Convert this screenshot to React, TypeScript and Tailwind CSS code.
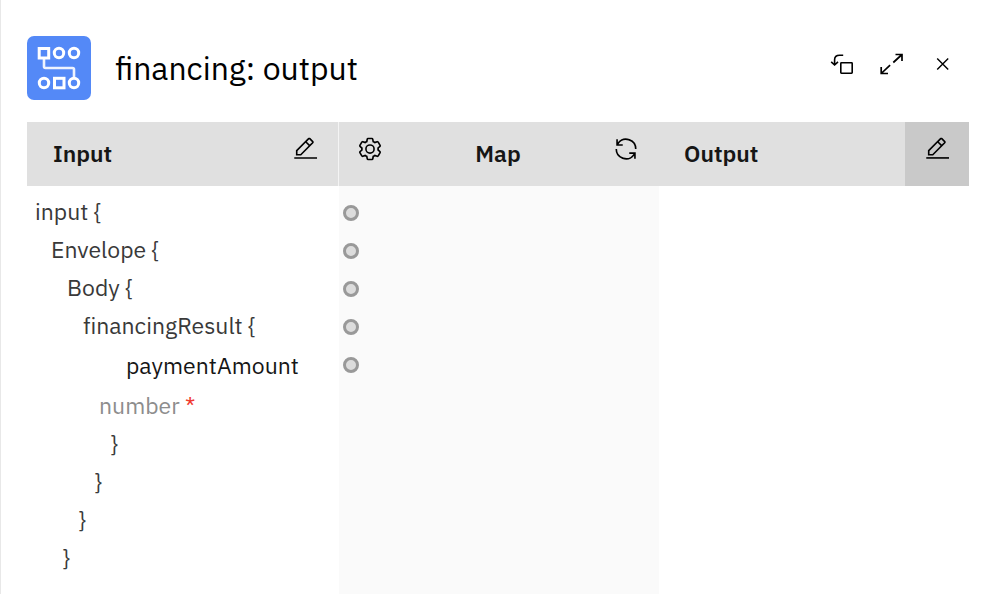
import type { ReactNode } from "react";

function Icon({ children }: { children: ReactNode }) {
  return (
    <svg viewBox="0 0 32 32" className="block size-[26px]" fill="currentColor" aria-hidden="true">
      {children}
    </svg>
  );
}

function EditIcon() {
  return (
    <Icon>
      <path d="M2.800 26h28v2h-28z" />
      <path d="M26.200 9c.8-.8.8-2 0-2.8l-3.6-3.6c-.8-.8-2-.8-2.8 0l-15 15V24h6.4l15-15zm-5-5L24.800 7.6l-3 3L18.200 7l3-3zM6.800 22v-3.6l10-10 3.6 3.6-10 10H6.800z" />
    </Icon>
  );
}

function SettingsIcon() {
  return (
    <Icon>
      <path d="M27,16.76c0-.25,0-.5,0-.76s0-.51,0-.77l1.92-1.68A2,2,0,0,0,29.3,11L26.94,7a2,2,0,0,0-1.73-1,2,2,0,0,0-.64.1l-2.43.82a11.35,11.35,0,0,0-1.31-.75l-.51-2.52a2,2,0,0,0-2-1.61H13.64a2,2,0,0,0-2,1.61l-.51,2.52a11.48,11.48,0,0,0-1.32.75L7.43,6.06A2,2,0,0,0,6.79,6,2,2,0,0,0,5.06,7L2.7,11a2,2,0,0,0,.41,2.51L5,15.24c0,.25,0,.5,0,.76s0,.51,0,.77L3.11,18.45A2,2,0,0,0,2.7,21L5.06,25a2,2,0,0,0,1.73,1,2,2,0,0,0,.64-.1l2.43-.82a11.35,11.35,0,0,0,1.31.75l.51,2.52a2,2,0,0,0,2,1.61h4.72a2,2,0,0,0,2-1.61l.51-2.52a11.48,11.48,0,0,0,1.32-.75l2.42.82a2,2,0,0,0,.64.1,2,2,0,0,0,1.73-1L29.3,21a2,2,0,0,0-.41-2.51ZM25.21,24l-3.43-1.16a8.86,8.86,0,0,1-2.71,1.57L18.36,28H13.64l-.71-3.55a9.36,9.36,0,0,1-2.7-1.57L6.79,24,4.43,20l2.72-2.4a8.9,8.9,0,0,1,0-3.13L4.43,12,6.79,8l3.43,1.16a8.86,8.86,0,0,1,2.71-1.57L13.64,4h4.72l.71,3.55a9.36,9.36,0,0,1,2.7,1.57L25.21,8,27.57,12l-2.72,2.4a8.9,8.9,0,0,1,0,3.13L27.57,20Z" />
      <path d="M16,22a6,6,0,1,1,6-6A5.94,5.94,0,0,1,16,22Zm0-10a3.91,3.91,0,0,0-4,4,3.91,3.91,0,0,0,4,4,3.91,3.91,0,0,0,4-4A3.91,3.91,0,0,0,16,12Z" />
    </Icon>
  );
}

function RenewIcon() {
  return (
    <Icon>
      <path d="M12 10H6.78A11 11 0 0 1 27 16h2A13 13 0 0 0 6 7.68V4H4v8h8zM20 22h5.22A11 11 0 0 1 5 16H3a13 13 0 0 0 23 8.32V28h2V20H20z" />
    </Icon>
  );
}

function DetachIcon() {
  return (
    <svg viewBox="0 0 26 26" className="block size-[26px]" fill="none" stroke="currentColor" strokeWidth="1.6" aria-hidden="true">
      <rect x="10.8" y="11.8" width="11.4" height="10.4" rx="0.6" />
      <path d="M13.2 4.300H9.600C6.400 4.300 4.600 6 4.600 8.800V13.600M1.200 10.800 4.600 14l3.400-3.200" />
    </svg>
  );
}

function ExpandIcon() {
  return (
    <svg viewBox="0 0 26 26" className="block size-[26px]" fill="none" stroke="currentColor" strokeWidth="1.7" aria-hidden="true">
      <path d="M15.500 3.500H22V10M22 3.500l-8.700 8M1.200 16v6.500H8M1.200 22.500l8.900-8.400" />
    </svg>
  );
}

function CloseIcon() {
  return (
    <svg viewBox="0 0 26 26" className="block size-[26px]" fill="none" stroke="currentColor" strokeWidth="1.4" aria-hidden="true">
      <path d="M7.200 7.500l11 11M18.200 7.500l-11 11" />
    </svg>
  );
}

function MapLogo() {
  return (
    <svg viewBox="0 0 64 64" className="block size-16 shrink-0" fill="none" stroke="#fff" strokeWidth="3" aria-hidden="true">
      <rect width="64" height="64" rx="7" fill="#5489f7" stroke="none" />
      <path d="M17 22.500V30.500q0 1.500 1.500 1.500H45.500q1.500 0 1.500 1.500v8" strokeWidth="2.600" stroke="#eef3fe" />
      <rect x="12.200" y="12.500" width="9.500" height="9.500" />
      <circle cx="32" cy="17" r="4.700" />
      <circle cx="47" cy="17" r="4.700" />
      <circle cx="17" cy="47" r="4.700" />
      <rect x="27.500" y="42.300" width="9.500" height="9.500" />
      <circle cx="47" cy="47" r="4.700" />
    </svg>
  );
}

function IconButton({ label, children }: { label: string; children: ReactNode }) {
  return (
    <button type="button" aria-label={label} className="block cursor-pointer text-black">
      {children}
    </button>
  );
}

function ColumnTitle({ children }: { children: ReactNode }) {
  return <h2 className="pb-0.5 text-[23px] leading-8 font-semibold text-[#161616]">{children}</h2>;
}

function Row({ className, children }: { className: string; children: ReactNode }) {
  return <li className={`h-[38px] leading-9 ${className}`}>{children}</li>;
}

const ports = ["input", "Envelope", "Body", "financingResult", "paymentAmount"];

export default function App() {
  return (
    <main className="flex min-h-screen flex-col border-l border-[#e8e8e8] bg-white pr-[33px] pl-[26px] font-['IBM_Plex_Sans','Noto_Sans',sans-serif] text-[#393939]">
      <header className="flex items-center justify-between pt-9 pb-[22px]">
        <div className="flex items-center gap-6">
          <MapLogo />
          <h1 className="text-[32px] leading-10 text-black">financing: output</h1>
        </div>
        <div className="flex gap-6 pr-[13px] pb-2">
          <IconButton label="Detach"><DetachIcon /></IconButton>
          <IconButton label="Expand"><ExpandIcon /></IconButton>
          <IconButton label="Close"><CloseIcon /></IconButton>
        </div>
      </header>

      <div className="grid flex-1 grid-cols-[312fr_320fr_310fr]">
        <section className="flex flex-col">
          <div className="flex h-16 items-center justify-between border-r border-[#f4f4f4] bg-[#e0e0e0] pr-5 pl-[26px]">
            <ColumnTitle>Input</ColumnTitle>
            <div className="pb-2.5"><IconButton label="Edit input"><EditIcon /></IconButton></div>
          </div>
          <ul className="pt-[7px] pl-2 text-[23px] [font-variant-ligatures:none]">
            <Row className="">input {"{"}</Row>
            <Row className="pl-4">Envelope {"{"}</Row>
            <Row className="pl-8">Body {"{"}</Row>
            <Row className="pl-12">financingResult {"{"}</Row>
            <li className="pl-16 leading-10">
              <div className="pl-[27px] text-[#161616]">paymentAmount</div>
              <div className="text-[#8d8d8d]">number <span className="text-[#f03a30]">*</span></div>
            </li>
            <Row className="pl-[75px]">{"}"}</Row>
            <Row className="pl-[59px]">{"}"}</Row>
            <Row className="pl-[43px]">{"}"}</Row>
            <Row className="pl-[27px]">{"}"}</Row>
          </ul>
        </section>

        <section className="flex flex-col bg-[#fafafa]">
          <div className="grid h-16 grid-cols-[1fr_auto_1fr] items-center bg-[#e0e0e0] pr-5 pl-[18px]">
            <div className="pb-2.5"><IconButton label="Map settings"><SettingsIcon /></IconButton></div>
            <ColumnTitle>Map</ColumnTitle>
            <div className="justify-self-end pb-2.5"><IconButton label="Refresh map"><RenewIcon /></IconButton></div>
          </div>
          <div className="flex flex-col items-start gap-[22px] pt-[19px] pl-1">
            {ports.map((port) => (
              <button key={port} type="button" aria-label={`Connect ${port}`} className="size-4 rounded-full border-3 border-[#999] bg-[#dcdcdc]" />
            ))}
          </div>
        </section>

        <section>
          <div className="flex h-16 items-center justify-between bg-[#e0e0e0] pl-[25px]">
            <ColumnTitle>Output</ColumnTitle>
            <button type="button" aria-label="Edit output" className="flex size-16 cursor-pointer items-center justify-center bg-[#c9c9c9] pb-2.5 text-black">
              <EditIcon />
            </button>
          </div>
        </section>
      </div>
    </main>
  );
}
